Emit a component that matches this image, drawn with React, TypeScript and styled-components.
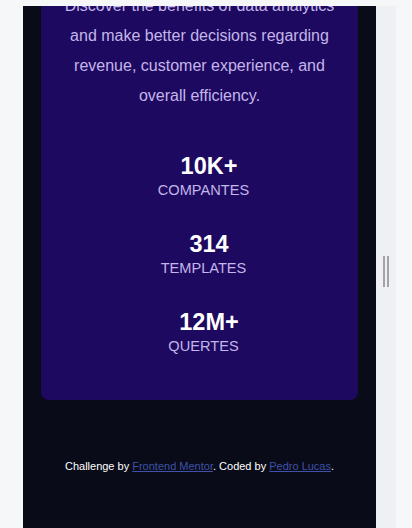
import React from "react";
import styled, { createGlobalStyle } from "styled-components";

const Global = createGlobalStyle`
  html, body { margin: 0; padding: 0; background: #f6f7f8; }
  body { font-family: "Liberation Sans", Arial, sans-serif; }
  * { box-sizing: border-box; }
`;

const Page = styled.div`
  display: flex;
  align-items: flex-start;
  padding: 6px 0 0 23px;
  height: 528px;
  overflow: hidden;
`;

const Frame = styled.div`
  width: 353px;
  height: 522px;
  background: #0a0b19;
  overflow: hidden;
  display: flex;
  flex-direction: column;
`;

const ResizeBar = styled.div`
  width: 20px;
  height: 522px;
  background: #eef0f3;
  display: flex;
  align-items: center;
  justify-content: center;
  padding-top: 9px;
`;

const Grip = styled.div`
  width: 6px;
  height: 31px;
  border-left: 2px solid #a3a3a6;
  border-right: 2px solid #a3a3a6;
`;

const Card = styled.section`
  margin: -55px 18px 0;
  padding: 40px 20px 46px;
  background: #1e0960;
  border-radius: 8px;
  display: flex;
  flex-direction: column;
  align-items: center;
`;

const Lead = styled.p`
  margin: 0;
  font-size: 16px;
  line-height: 30px;
  color: #c3b6ea;
  text-align: center;
`;

const Stats = styled.ul`
  list-style: none;
  margin: 43px 0 0;
  padding: 0 0 0 8px;
  display: flex;
  flex-direction: column;
  gap: 34px;
  align-items: center;
`;

const Stat = styled.li`
  display: flex;
  flex-direction: column;
  align-items: center;
  gap: 4px;
`;

const Value = styled.strong`
  font-size: 23.5px;
  line-height: 24px;
  font-weight: 700;
  color: #ffffff;
  padding-left: 11px;
`;

const Label = styled.span`
  font-size: 14.6px;
  line-height: 16px;
  color: #c3b6ea;
  text-transform: uppercase;
`;

const Footer = styled.footer`
  margin-top: 58px;
  font-size: 11px;
  line-height: 16px;
  color: #ffffff;
  text-align: center;
`;

const Link = styled.a`
  color: #3d52a8;
  text-decoration: underline;
`;

const stats = [
  { value: "10K+", label: "Compantes" },
  { value: "314", label: "Templates" },
  { value: "12M+", label: "Quertes" },
];

export default function App() {
  return (
    <>
      <Global />
      <Page>
        <Frame>
          <Card>
            <Lead>
              Discover the benefits of data analytics and make better decisions
              regarding revenue, customer experience, and overall efficiency.
            </Lead>
            <Stats>
              {stats.map((s) => (
                <Stat key={s.label}>
                  <Value>{s.value}</Value>
                  <Label>{s.label}</Label>
                </Stat>
              ))}
            </Stats>
          </Card>
          <Footer>
            Challenge by <Link href="#">Frontend Mentor</Link>. Coded by{" "}
            <Link href="#">Pedro Lucas</Link>.
          </Footer>
        </Frame>
        <ResizeBar>
          <Grip />
        </ResizeBar>
      </Page>
    </>
  );
}
